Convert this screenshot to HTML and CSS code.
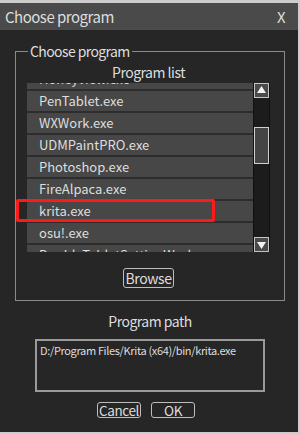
FILE: index.html
```html
<!DOCTYPE html>
<html lang="en">

<head>
    <meta charset="UTF-8">
    <meta name="viewport" content="width=device-width, initial-scale=1.0">
    <title>Choose program</title>
    <link rel="stylesheet" href="styles.css">
</head>

<body>
    <div class="window">
        <div class="titleBar">
            <span>Choose program</span>
            <span class="closeBtn">X</span>
        </div>
        <div class="main">
            <fieldset class="group">
                <legend>Choose program</legend>
                <div class="listTitle">Program list</div>
                <div class="programList">
                    <div class="viewport">
                        <div class="items">
                            <div class="item">Honeyview.exe</div>
                            <div class="item">PenTablet.exe</div>
                            <div class="item">WXWork.exe</div>
                            <div class="item">UDMPaintPRO.exe</div>
                            <div class="item">Photoshop.exe</div>
                            <div class="item">FireAlpaca.exe</div>
                            <div class="item">krita.exe</div>
                            <div class="item">osu!.exe</div>
                            <div class="item">DoubleTabletSettingWorker.exe</div>
                        </div>
                    </div>
                    <div class="scrollBar">
                        <div class="arrowBtn">
                            <svg width="13" height="13" viewBox="0 0 13 13"><polygon points="2,9 6.5,2 11,9" fill="#f2f2f2" /></svg>
                        </div>
                        <div class="track">
                            <div class="thumb"></div>
                        </div>
                        <div class="arrowBtn">
                            <svg width="13" height="13" viewBox="0 0 13 13"><polygon points="2,4 6.5,11 11,4" fill="#f2f2f2" /></svg>
                        </div>
                    </div>
                </div>
                <div class="btnRow">
                    <div class="btn">Browse</div>
                </div>
            </fieldset>
            <div class="pathTitle">Program path</div>
            <div class="pathBox">D:/Program Files/Krita (x64)/bin/krita.exe</div>
            <div class="btnRow bottomRow">
                <div class="btn smallBtn">Cancel</div>
                <div class="btn smallBtn">OK</div>
            </div>
        </div>
        <div class="highlight"></div>
    </div>
</body>

</html>
```

FILE: styles.css
```css
html,
body {
    margin: 0;
    padding: 0;
    background: #cdcdcd;
    font-family: "Noto Sans CJK SC", "Noto Sans", sans-serif;
    color: #dedede;
}

.window {
    position: relative;
    width: 298px;
    height: 429px;
    margin-top: 3px;
    background: #262626;
    box-sizing: border-box;
}

.titleBar {
    display: flex;
    justify-content: space-between;
    align-items: center;
    height: 27px;
    padding: 0 13px 0 5px;
    background: #4a4a4a;
    font-size: 15px;
    letter-spacing: -0.5px;
}

.main {
    padding: 0 13px 0 15px;
}

.group {
    margin: 11px 0 0 0;
    padding: 0 14px 12px 11px;
    border: 1px solid #8a8a8a;
    min-width: 0;
}

.group legend {
    padding: 0 2px;
    margin-left: 1px;
    font-size: 14px;
    line-height: 20px;
    letter-spacing: -0.6px;
}

.listTitle {
    margin-top: 2px;
    text-align: center;
    font-size: 14px;
    line-height: 18px;
    letter-spacing: -0.5px;
}

.programList {
    display: flex;
    height: 169px;
    margin-top: 2px;
}

.viewport {
    flex: 1;
    overflow: hidden;
    background: #2d2d2d;
    border-right: 1px solid #111;
}

/* list scrolled down a little */
.items {
    display: flex;
    flex-direction: column;
    gap: 2px;
    margin-top: -14px;
}

.item {
    height: 20px;
    padding-left: 12px;
    background: #474747;
    font-size: 13px;
    line-height: 20px;
    white-space: nowrap;
    overflow: hidden;
}

.scrollBar {
    display: flex;
    flex-direction: column;
    width: 15px;
    background: #1c1c1c;
    border-right: 1px solid #111;
}

.arrowBtn {
    display: flex;
    align-items: center;
    justify-content: center;
    height: 15px;
    background: #4a4a4a;
    border: 1px solid #c4c4c4;
    box-sizing: border-box;
}

.track {
    flex: 1;
}

.thumb {
    height: 37px;
    margin-top: 29px;
    background: #454545;
    border: 1px solid #d0d0d0;
    box-sizing: border-box;
}

.btnRow {
    display: flex;
    justify-content: center;
    gap: 10px;
    margin-top: 16px;
}

.btn {
    height: 20px;
    padding: 0 1px;
    border: 1px solid #bdbdbd;
    border-radius: 3px;
    box-sizing: border-box;
    font-size: 14px;
    line-height: 18px;
    letter-spacing: -0.4px;
}

.pathTitle {
    margin-top: 10px;
    text-align: center;
    font-size: 14px;
    line-height: 20px;
    letter-spacing: -0.5px;
}

.pathBox {
    width: 230px;
    height: 53px;
    margin: 8px auto 0;
    padding: 2px 3px;
    border: 2px solid #9a9a9a;
    box-sizing: border-box;
    font-size: 11px;
    line-height: 14px;
    letter-spacing: -0.35px;
    white-space: nowrap;
    overflow: hidden;
}

.bottomRow {
    margin-top: 10px;
    padding-right: 8px;
}

.smallBtn {
    width: 44px;
    height: 16px;
    padding: 0;
    text-align: center;
    font-size: 13.5px;
    line-height: 14px;
}

.highlight {
    position: absolute;
    left: 16px;
    top: 196px;
    width: 199px;
    height: 23px;
    border: 3px solid #ff1a1a;
    border-radius: 2px;
    box-sizing: border-box;
}
```
